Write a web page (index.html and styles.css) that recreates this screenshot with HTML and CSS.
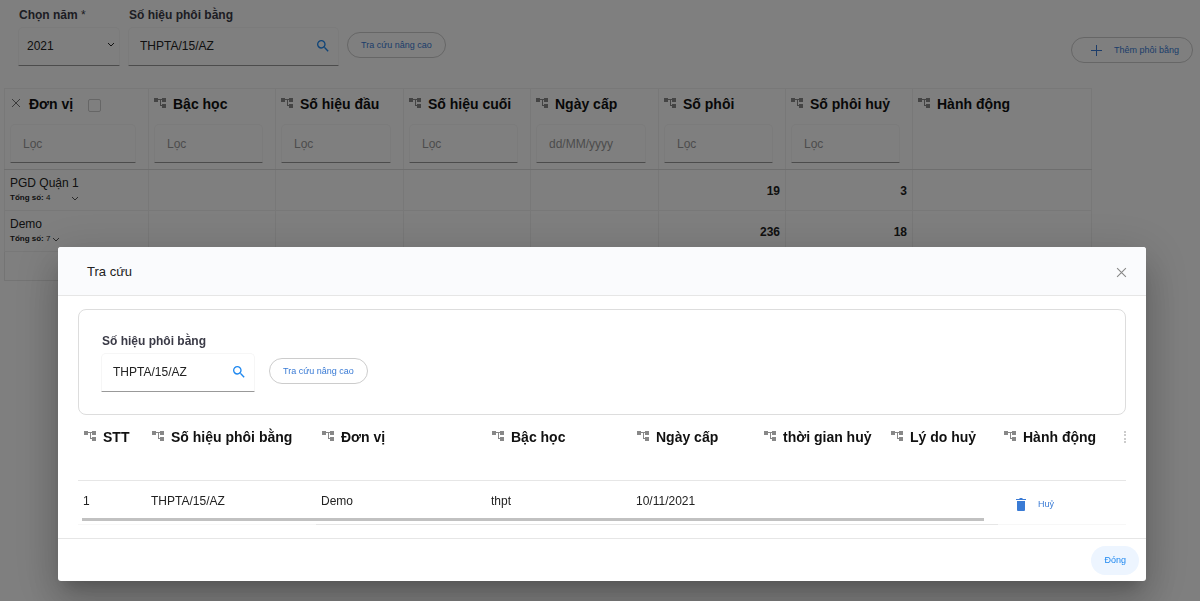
FILE: index.html
```
<!DOCTYPE html>
<html lang="vi">
<head>
  <meta charset="UTF-8">
  <title>Tra cứu phôi bằng</title>
  <meta name="viewport" content="width=device-width, initial-scale=1.0">
  <link rel="stylesheet" href="styles.css">
</head>
<body>
  <!-- shared icons -->
  <svg class="icon-defs" aria-hidden="true">
    <symbol id="icon-tree" viewBox="0 0 12 10"><path d="M0 0h4v1h4V0h4v4H8V2H7v5h1V6h4v4H8V8H6V2H4v2H0z"/></symbol>
    <symbol id="icon-search" viewBox="0 0 24 24"><path d="M15.5 14h-.79l-.28-.27A6.47 6.47 0 0 0 16 9.5 6.5 6.5 0 1 0 9.5 16c1.61 0 3.09-.59 4.23-1.57l.27.28v.79l5 4.99L20.49 19l-4.99-5zm-6 0C7.01 14 5 11.99 5 9.5S7.01 5 9.5 5 14 7.01 14 9.5 11.99 14 9.5 14z"/></symbol>
    <symbol id="icon-close" viewBox="0 0 10 10"><path d="M1 1l8 8M9 1l-8 8" fill="none" stroke="currentColor"/></symbol>
    <symbol id="icon-down" viewBox="0 0 8 5"><path d="M1 1l3 3 3-3" fill="none" stroke="currentColor"/></symbol>
  </svg>

  <main class="page">
    <form class="toolbar">
      <div class="field field-year">
        <label class="field-label" for="year">Chọn năm<span class="required"> *</span></label>
        <div class="box">
          <select id="year" class="box-select">
            <option>2021</option>
          </select>
          <svg class="select-arrow" viewBox="0 0 8 5"><path d="M1 1l3 3 3-3" fill="none" stroke="currentColor"/></svg>
        </div>
      </div>
      <div class="field field-code">
        <label class="field-label" for="code">Số hiệu phôi bằng</label>
        <div class="box">
          <input id="code" class="box-input" type="text" value="THPTA/15/AZ">
          <button class="search-btn" type="button" aria-label="Tìm"><svg><use href="#icon-search"/></svg></button>
        </div>
      </div>
      <button class="pill-btn" type="button">Tra cứu nâng cao</button>
      <button class="pill-btn add-btn" type="button">
        <svg viewBox="0 0 11 11"><path d="M5 0h1v5h5v1H6v5H5V6H0V5h5z"/></svg>
        Thêm phôi bằng
      </button>
    </form>

    <table class="main-table">
      <colgroup>
        <col class="col-unit">
        <col class="col-mid">
        <col class="col-serial">
        <col class="col-mid">
        <col class="col-serial">
        <col span="2" class="col-mid">
        <col class="col-action">
      </colgroup>
      <thead>
        <tr>
          <th>
            <div class="th-title"><svg class="clear-icon"><use href="#icon-close"/></svg>Đơn vị<input class="check" type="checkbox" aria-label="Chọn đơn vị"></div>
            <input class="filter" type="text" placeholder="Lọc" aria-label="Lọc đơn vị">
          </th>
          <th>
            <div class="th-title"><svg class="tree-icon"><use href="#icon-tree"/></svg>Bậc học</div>
            <input class="filter" type="text" placeholder="Lọc" aria-label="Lọc bậc học">
          </th>
          <th>
            <div class="th-title"><svg class="tree-icon"><use href="#icon-tree"/></svg>Số hiệu đầu</div>
            <input class="filter" type="text" placeholder="Lọc" aria-label="Lọc số hiệu đầu">
          </th>
          <th>
            <div class="th-title"><svg class="tree-icon"><use href="#icon-tree"/></svg>Số hiệu cuối</div>
            <input class="filter" type="text" placeholder="Lọc" aria-label="Lọc số hiệu cuối">
          </th>
          <th>
            <div class="th-title"><svg class="tree-icon"><use href="#icon-tree"/></svg>Ngày cấp</div>
            <input class="filter" type="text" placeholder="dd/MM/yyyy" aria-label="Lọc ngày cấp">
          </th>
          <th>
            <div class="th-title"><svg class="tree-icon"><use href="#icon-tree"/></svg>Số phôi</div>
            <input class="filter" type="text" placeholder="Lọc" aria-label="Lọc số phôi">
          </th>
          <th>
            <div class="th-title"><svg class="tree-icon"><use href="#icon-tree"/></svg>Số phôi huỷ</div>
            <input class="filter" type="text" placeholder="Lọc" aria-label="Lọc số phôi huỷ">
          </th>
          <th>
            <div class="th-title"><svg class="tree-icon"><use href="#icon-tree"/></svg>Hành động</div>
          </th>
        </tr>
      </thead>
      <tbody>
        <tr>
          <td>
            <div class="unit">
              <div>PGD Quận 1</div>
              <div class="unit-total"><span><b>Tổng số:</b> 4</span><svg><use href="#icon-down"/></svg></div>
            </div>
          </td>
          <td></td><td></td><td></td><td></td>
          <td class="num">19</td>
          <td class="num">3</td>
          <td></td>
        </tr>
        <tr>
          <td>
            <div class="unit">
              <div>Demo</div>
              <div class="unit-total"><span><b>Tổng số:</b> 7</span><svg><use href="#icon-down"/></svg></div>
            </div>
          </td>
          <td></td><td></td><td></td><td></td>
          <td class="num">236</td>
          <td class="num">18</td>
          <td></td>
        </tr>
      </tbody>
      <tfoot>
        <tr><td colspan="8"></td></tr>
      </tfoot>
    </table>
  </main>

  <div class="backdrop">
    <section class="modal" role="dialog" aria-labelledby="modal-title">
      <header class="modal-header">
        <h2 id="modal-title" class="modal-title">Tra cứu</h2>
        <button class="close-btn" type="button" aria-label="Đóng"><svg><use href="#icon-close"/></svg></button>
      </header>

      <div class="modal-body">
        <form class="search-panel">
          <div class="field field-modal-code">
            <label class="field-label" for="modal-code">Số hiệu phôi bằng</label>
            <div class="box">
              <input id="modal-code" class="box-input" type="text" value="THPTA/15/AZ">
              <button class="search-btn" type="button" aria-label="Tìm"><svg><use href="#icon-search"/></svg></button>
            </div>
          </div>
          <button class="pill-btn" type="button">Tra cứu nâng cao</button>
        </form>

        <table class="result-table">
          <colgroup>
            <col class="col-stt">
            <col span="2" class="col-wide">
            <col class="col-level">
            <col span="2" class="col-date">
            <col class="col-reason">
            <col>
          </colgroup>
          <thead>
            <tr>
              <th><div class="th-title"><svg class="tree-icon"><use href="#icon-tree"/></svg>STT</div></th>
              <th><div class="th-title"><svg class="tree-icon"><use href="#icon-tree"/></svg>Số hiệu phôi bằng</div></th>
              <th><div class="th-title"><svg class="tree-icon"><use href="#icon-tree"/></svg>Đơn vị</div></th>
              <th><div class="th-title"><svg class="tree-icon"><use href="#icon-tree"/></svg>Bậc học</div></th>
              <th><div class="th-title"><svg class="tree-icon"><use href="#icon-tree"/></svg>Ngày cấp</div></th>
              <th><div class="th-title"><svg class="tree-icon"><use href="#icon-tree"/></svg>thời gian huỷ</div></th>
              <th><div class="th-title"><svg class="tree-icon"><use href="#icon-tree"/></svg>Lý do huỷ</div></th>
              <th><div class="th-title"><svg class="tree-icon"><use href="#icon-tree"/></svg>Hành động<span class="grip"></span></div></th>
            </tr>
          </thead>
          <tbody>
            <tr>
              <td>1</td>
              <td>THPTA/15/AZ</td>
              <td>Demo</td>
              <td>thpt</td>
              <td>10/11/2021</td>
              <td></td>
              <td></td>
              <td>
                <button class="delete-btn" type="button">
                  <svg viewBox="0 0 10 13"><path d="M0 1h3l1-1h2l1 1h3v1H0zM1 3h8v9q0 1-1 1H2q-1 0-1-1z"/></svg>
                  Huỷ
                </button>
              </td>
            </tr>
          </tbody>
        </table>
        <div class="scroll-track"><div class="scroll-thumb"></div></div>
        <div class="row-line"><span></span></div>
      </div>

      <footer class="modal-footer">
        <button class="done-btn" type="button">Đóng</button>
      </footer>
    </section>
  </div>
</body>
</html>
```
FILE: styles.css
```
* {
  box-sizing: border-box;
}
body {
  margin: 0;
  background: #fff;
  color: #222;
  font-family: "Liberation Sans", Arial, sans-serif;
  font-size: 12px;
}
button, input, select {
  font-family: inherit;
  color: inherit;
}
button {
  padding: 0;
  border: 0;
  background: none;
  cursor: pointer;
}
svg {
  fill: currentColor;
  flex-shrink: 0;
}
.icon-defs {
  display: none;
}

/* toolbar */
.page {
  padding: 8px 7px 0 4px;
}
.toolbar {
  display: flex;
  align-items: center;
  gap: 8px;
  height: 80px;
  padding: 0 0 24px 14px;
}
.field-year {
  width: 102px;
}
.field-code {
  width: 211px;
}
.field-modal-code {
  width: 154px;
}
.field-label {
  display: block;
  height: 20px;
  padding-left: 1px;
  line-height: 16px;
  font-weight: bold;
  color: #3a3a46;
}
.required {
  font-weight: normal;
}
.box {
  display: flex;
  align-items: center;
  height: 39px;
  border: 1px solid #f6f6f6;
  border-bottom-color: #999;
  border-radius: 5px 5px 0 0;
}
.box-input, .box-select {
  flex: 1;
  min-width: 0;
  height: 100%;
  padding: 0 0 0 11px;
  border: 0;
  background: none;
  font-size: 12px;
  outline: none;
}
.box-select {
  padding-left: 8px;
  appearance: none;
}
.select-arrow {
  width: 8px;
  height: 5px;
  margin: 0 4px 3px 0;
}
.search-btn {
  width: 16px;
  height: 16px;
  margin-right: 7px;
  color: #1e88f0;
}
.search-btn svg {
  display: block;
  width: 16px;
  height: 16px;
}
.pill-btn {
  height: 26px;
  padding: 0 13px;
  border: 1px solid #ccc;
  border-radius: 13px;
  color: #3a7bd5;
  font-size: 9px;
  white-space: nowrap;
}
.toolbar .pill-btn {
  margin-top: 18px;
}
.toolbar .add-btn {
  display: flex;
  align-items: center;
  gap: 12px;
  margin: 28px 0 0 auto;
  padding-left: 19px;
}
.add-btn svg {
  width: 11px;
  height: 11px;
}

/* main table */
table {
  border-collapse: collapse;
  table-layout: fixed;
}
.main-table {
  width: 1088px;
}
.col-unit {
  width: 144px;
}
.col-mid {
  width: 127px;
}
.col-serial {
  width: 128px;
}
.main-table th {
  height: 81px;
  padding: 7px 12px 0 5px;
  border: 1px solid #f0f0f0;
  border-bottom-color: #dcdcdc;
  vertical-align: top;
}
.main-table td {
  height: 41px;
  padding: 1px 5px 0;
  border: 1px solid #f0f0f0;
  border-top-color: #fafafa;
}
.main-table tfoot td {
  height: 29px;
  border-color: #e8e8e8;
}
.th-title {
  display: flex;
  align-items: center;
  height: 16px;
  font-size: 14px;
  font-weight: bold;
  color: #111;
  white-space: nowrap;
}
.tree-icon {
  width: 12px;
  height: 10px;
  margin: 0 7px 3px 0;
  color: #888;
}
.clear-icon {
  width: 10px;
  height: 10px;
  margin: 0 8px 3px 1px;
  color: #777;
}
.check {
  appearance: none;
  width: 13px;
  height: 13px;
  margin: 2px 0 0 15px;
  border: 1px solid #ccc;
  border-radius: 2px;
}
.filter {
  display: block;
  width: 100%;
  height: 39px;
  margin-top: 12px;
  padding: 0 12px;
  border: 1px solid #f6f6f6;
  border-bottom-color: #999;
  border-radius: 5px 5px 0 0;
  background: none;
  font-size: 12px;
}
.filter::placeholder {
  color: #999;
}
.unit {
  display: inline-block;
  line-height: 15px;
}
.unit-total {
  display: flex;
  align-items: center;
  justify-content: space-between;
  gap: 2px;
  font-size: 8px;
  line-height: 14px;
}
.unit-total svg {
  width: 8px;
  height: 5px;
  color: #555;
}
.main-table .num {
  font-weight: bold;
  text-align: right;
}

/* modal */
.backdrop {
  position: fixed;
  inset: 0;
  display: flex;
  align-items: flex-end;
  padding: 0 54px 20px 58px;
  background: rgba(0, 0, 0, 0.5);
}
.modal {
  flex: 1;
  min-width: 0;
  background: #fff;
  border-radius: 3px;
  box-shadow: 0 11px 15px -7px rgba(0, 0, 0, 0.2), 0 24px 38px 3px rgba(0, 0, 0, 0.14), 0 9px 46px 8px rgba(0, 0, 0, 0.12);
}
.modal-header {
  display: flex;
  align-items: center;
  justify-content: space-between;
  height: 49px;
  padding: 0 19px 0 29px;
  background: #fafbfd;
  border-bottom: 1px solid #e6e6e6;
  border-radius: 3px 3px 0 0;
}
.modal-title {
  margin: 0;
  font-size: 13px;
  font-weight: normal;
}
.close-btn {
  margin-top: 2px;
  color: #888;
}
.close-btn svg {
  display: block;
  width: 11px;
  height: 11px;
}
.modal-body {
  padding: 13px 20px;
}
.search-panel {
  display: flex;
  align-items: center;
  gap: 14px;
  height: 106px;
  padding: 0 22px;
  border: 1px solid #ddd;
  border-radius: 8px;
}
.search-panel .pill-btn {
  margin-top: 17px;
}
.result-table {
  width: 100%;
}
.col-stt {
  width: 68px;
}
.col-wide {
  width: 170px;
}
.col-level {
  width: 145px;
}
.col-date {
  width: 127px;
}
.col-reason {
  width: 113px;
}
.result-table th {
  height: 65px;
  padding: 14px 0 0 6px;
  border-bottom: 1px solid #e6e6e6;
  vertical-align: top;
}
.result-table td {
  height: 38px;
  padding: 4px 0 0 5px;
}
.grip {
  height: 12px;
  margin-left: auto;
  border-left: 2px dotted #ccc;
}
.delete-btn {
  display: flex;
  align-items: center;
  gap: 12px;
  margin: 6px 0 0 13px;
  color: #3a7bd5;
  font-size: 9px;
}
.delete-btn svg {
  width: 10px;
  height: 13px;
}
.scroll-track {
  padding: 0 142px 0 4px;
}
.scroll-thumb {
  height: 3px;
  background: #c1c1c1;
}
.row-line {
  display: flex;
  height: 4px;
  padding: 3px 128px 0 238px;
  background: linear-gradient(#f7f7f7, #f7f7f7) bottom / 100% 1px no-repeat;
}
.row-line span {
  flex: 1;
  background: #e6e6e6;
}
.modal-footer {
  display: flex;
  align-items: center;
  justify-content: flex-end;
  height: 43px;
  padding-right: 7px;
  border-top: 1px solid #e6e6e6;
}
.done-btn {
  height: 29px;
  padding: 0 13px;
  border-radius: 15px;
  background: #edf5ff;
  color: #1e88f0;
  font-size: 9px;
}
```
